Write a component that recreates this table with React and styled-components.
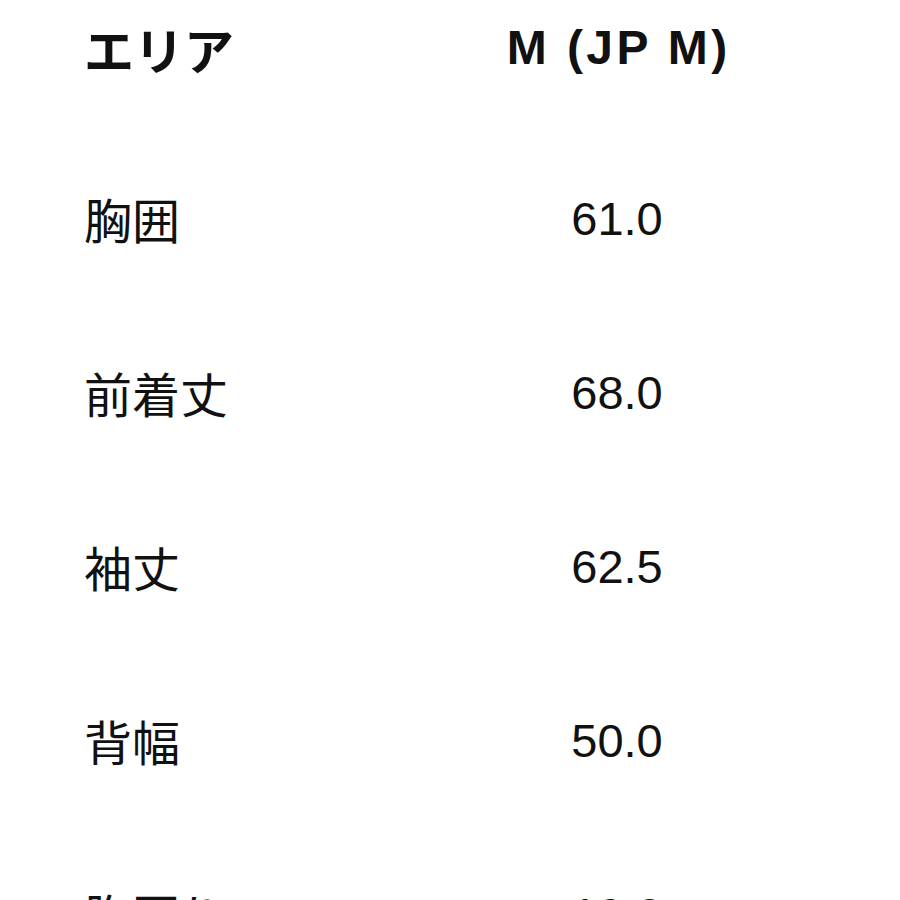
import React from "react";
import styled, { createGlobalStyle } from "styled-components";

const Global = createGlobalStyle`
  html, body { margin: 0; padding: 0; background: #ffffff; }
  body { width: 900px; height: 900px; overflow: hidden; }
`;

const Page = styled.div`
  width: 900px;
  height: 900px;
  overflow: hidden;
  background: #ffffff;
  color: #111111;
`;

const Grid = styled.div`
  display: grid;
  grid-template-columns: 420px 226px;
  padding-left: 84px;
`;

const HeadRow = styled.div`
  display: contents;
`;

const Cell = styled.div`
  height: ${(p) => p.$h}px;
  display: flex;
  align-items: center;
  justify-content: ${(p) => (p.$center ? "center" : "flex-start")};
  margin-top: ${(p) => p.$mt || 0}px;
  white-space: nowrap;
`;

const HeadLabel = styled.span`
  font-family: "Noto Sans CJK JP", "Noto Sans", sans-serif;
  font-weight: 700;
  font-size: 50px;
  line-height: 1;
  letter-spacing: 0px;
`;

const HeadValue = styled.span`
  font-family: "Liberation Sans", Arial, sans-serif;
  font-weight: 700;
  font-size: 48px;
  line-height: 1;
  letter-spacing: 3.4px;
  margin-right: -3.4px;
`;

const Label = styled.span`
  font-family: "Noto Sans CJK JP", "Noto Sans", sans-serif;
  font-weight: 400;
  font-size: 48px;
  line-height: 1;
`;

const Value = styled.span`
  font-family: "Liberation Sans", Arial, sans-serif;
  font-weight: 400;
  font-size: 47px;
  line-height: 1;
`;

const rows = [
  ["胸囲", "61.0"],
  ["前着丈", "68.0"],
  ["袖丈", "62.5"],
  ["背幅", "50.0"],
  ["胸囲り", "19.0"],
];

export default function App() {
  return (
    <Page>
      <Global />
      <Grid>
        <HeadRow>
          <Cell $h={96}>
            <HeadLabel>エリア</HeadLabel>
          </Cell>
          <Cell $h={96} $center>
            <HeadValue>M (JP M)</HeadValue>
          </Cell>
        </HeadRow>
        {rows.map(([l, v], i) => (
          <React.Fragment key={l}>
            <Cell $h={174} $mt={i === 0 ? 35 : 0}>
              <Label>{l}</Label>
            </Cell>
            <Cell $h={174} $mt={i === 0 ? 35 : 0} $center>
              <Value>{v}</Value>
            </Cell>
          </React.Fragment>
        ))}
      </Grid>
    </Page>
  );
}
